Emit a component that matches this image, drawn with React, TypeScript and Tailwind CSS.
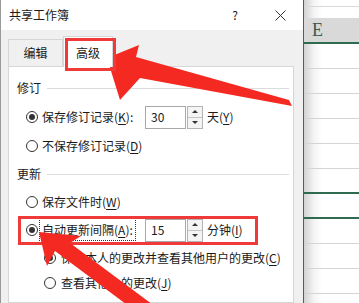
import React from 'react';

const font = "font-['Noto_Sans_CJK_SC','Noto_Sans',sans-serif]";

function Radio({ checked = false }: { checked?: boolean }) {
  return (
    <span className="w-[12px] h-[12px] rounded-full border border-[#333] bg-white flex items-center justify-center shrink-0">
      {checked && <span className="w-[6px] h-[6px] rounded-full bg-[#333]" />}
    </span>
  );
}

function Key({ k }: { k: string }) {
  return (
    <>
      (<span className="underline underline-offset-2">{k}</span>)
    </>
  );
}

function Spin({ value }: { value: string }) {
  return (
    <div className="flex items-center">
      <div className="w-[41px] h-[23px] border border-[#a8a8a8] bg-white flex items-center pl-[5px] text-[12px]">
        {value}
      </div>
      <div className="ml-[1px] w-[16px] h-[23px] flex flex-col border border-[#b4b4b4] bg-[#f4f4f4]">
        <div className="flex-1 flex items-center justify-center border-b border-[#c4c4c4]">
          <span className="w-0 h-0 border-l-[3px] border-r-[3px] border-b-[3px] border-l-transparent border-r-transparent border-b-[#333]" />
        </div>
        <div className="flex-1 flex items-center justify-center">
          <span className="w-0 h-0 border-l-[3px] border-r-[3px] border-t-[3px] border-l-transparent border-r-transparent border-t-[#333]" />
        </div>
      </div>
    </div>
  );
}

function GroupLabel({ text }: { text: string }) {
  return (
    <div className="h-[28px] flex items-center pl-[8px] pr-[4px] gap-[6px]">
      <span className="text-[12px]">{text}</span>
      <span className="flex-1 h-px bg-[#dcdcdc]" />
    </div>
  );
}

export default function App() {
  const rows = Array.from({ length: 11 });
  return (
    <div className={`relative w-[359px] h-[303px] overflow-hidden flex bg-white text-[#1a1a1a] ${font}`}>
      {/* dialog */}
      <div className="w-[304px] h-full flex flex-col border-r border-[#5a5a5a] bg-[#f0f0f0] border-l border-l-[#9a9a9a]">
        <div className="h-[30px] shrink-0 bg-white flex items-center pl-[8px] pr-[17px]">
          <span className="text-[12px]">共享工作簿</span>
          <span className="ml-auto text-[12px] w-[10px] text-center">?</span>
          <svg className="ml-[35px]" width="11" height="11" viewBox="0 0 11 11">
            <path d="M0.5 0.5 L10.5 10.5 M10.5 0.5 L0.5 10.5" stroke="#333" strokeWidth="1" />
          </svg>
        </div>
        <div className="h-[36px] shrink-0 flex items-end pl-[7px]">
          <div className="w-[55px] h-[27px] border border-b-0 border-[#d6d6d6] flex items-center justify-center text-[12px]">
            编辑
          </div>
          <div className="relative w-[50px] h-[31px] -mb-px z-10 bg-white border border-b-0 border-[#d6d6d6] flex items-center justify-center text-[12px] pt-[2px]">
            高级
            <span className="absolute left-[1px] top-[1px] w-[51px] h-[33px] border-[3px] border-[#f03a3a]" />
          </div>
        </div>
        <div className="ml-[7px] w-[286px] flex-1 bg-white border border-[#d6d6d6] pt-[7px] text-[12px]">
          <GroupLabel text="修订" />
          <div className="h-[30px] flex items-center pl-[17px]">
            <Radio checked />
            <span className="ml-[4px] w-[103px]">
              保存修订记录<Key k="K" />:
            </span>
            <Spin value="30" />
            <span className="ml-[4px]">
              天<Key k="Y" />
            </span>
          </div>
          <div className="h-[28px] flex items-center pl-[17px]">
            <Radio />
            <span className="ml-[4px]">
              不保存修订记录<Key k="D" />
            </span>
          </div>
          <GroupLabel text="更新" />
          <div className="h-[28px] flex items-center pl-[17px]">
            <Radio />
            <span className="ml-[4px]">
              保存文件时<Key k="W" />
            </span>
          </div>
          <div className="relative h-[28px] flex items-center pl-[17px]">
            <Radio checked />
            <span className="ml-[2px] w-[105px]">
              <span className="px-[2px] py-[2px] outline outline-1 outline-dotted outline-[#333]">
                自动更新间隔<Key k="A" />:
              </span>
            </span>
            <Spin value="15" />
            <span className="ml-[4px]">
              分钟<Key k="I" />
            </span>
            <span className="absolute left-[9px] top-0 w-[240px] h-[29px] border-[3px] border-[#f03a3a]" />
          </div>
          <div className="h-[28px] flex items-center pl-[35px]">
            <Radio checked />
            <span className="ml-[5px]">
              保存本人的更改并查看其他用户的更改<Key k="C" />
            </span>
          </div>
          <div className="h-[22px] flex items-center pl-[35px]">
            <Radio />
            <span className="ml-[5px]">
              查看其他人的更改<Key k="J" />
            </span>
          </div>
        </div>
      </div>

      {/* spreadsheet */}
      <div className="flex-1 h-full flex flex-col bg-[linear-gradient(to_right,#d2d2d2,#f4f4f4_10px,#ffffff_18px)]">
        <div className="h-[7px] shrink-0 border-b border-[#dadada]" />
        <div className="h-[11px] shrink-0" />
        <div className="h-[26px] shrink-0 bg-[#d9d9d9] border-b-2 border-[#2f6b4f] flex items-center pl-[8px] font-['Liberation_Serif',serif] text-[18px] text-[#3b5a4c]">
          E
        </div>
        {rows.map((_, i) => (
          <div
            key={i}
            className={`h-[25px] shrink-0 ${
              i === 5 || i === 6 ? 'border-b-2 border-[#2f6b4f]' : 'border-b border-[#d4d4d4]'
            }`}
          />
        ))}
      </div>

      {/* annotation arrows */}
      <svg className="absolute inset-0 pointer-events-none" width="359" height="303" viewBox="0 0 359 303">
        <polygon
          fill="#f42a22"
          points="107,58 139,45 136,57 289,100 292,106 140,78 120,100"
        />
        <polygon
          fill="#f42a22"
          points="39,232 81,236 70,243 180,325 170,337 55,251 47,266"
        />
      </svg>
    </div>
  );
}
